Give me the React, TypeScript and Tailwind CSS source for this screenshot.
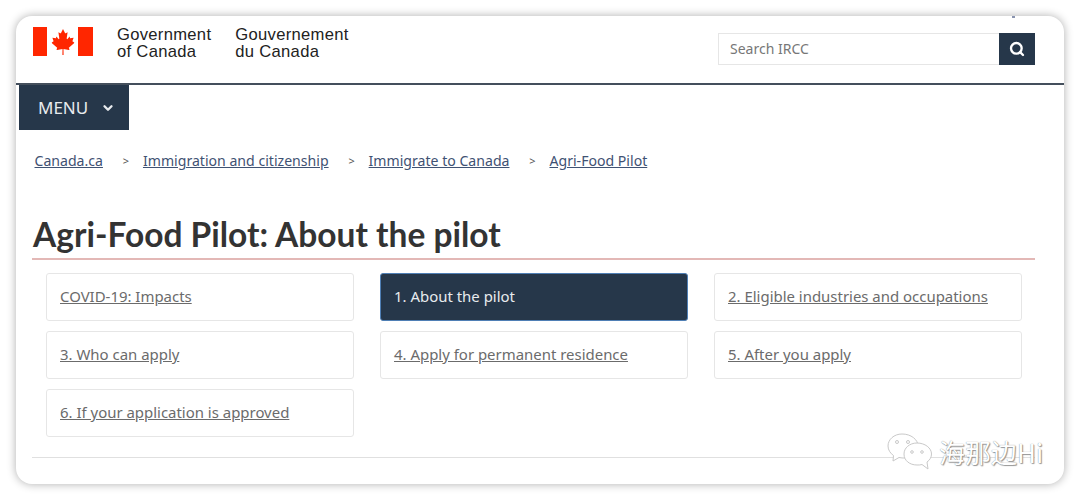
import { Search, ChevronDown } from "lucide-react";

const links = [
  { label: "COVID-19: Impacts" },
  { label: "1. About the pilot", active: true },
  { label: "2. Eligible industries and occupations" },
  { label: "3. Who can apply" },
  { label: "4. Apply for permanent residence" },
  { label: "5. After you apply" },
  { label: "6. If your application is approved" },
];

const crumbs = ["Canada.ca", "Immigration and citizenship", "Immigrate to Canada", "Agri-Food Pilot"];

const MapleLeaf = () => (
  <svg viewBox="0 0 24 24" className="w-[24px] h-[26px]" preserveAspectRatio="none">
    <path
      fill="#ff2600"
      d="M12 0 L14 3.6 C14.3 4 14.7 4 15.2 3.7 L16.6 3 L15.7 8.6 C15.6 9.4 16.2 9.6 16.7 9 L18.6 7 L19.1 8.6 L22.6 8 L21.4 11.4 L22.9 12.2 C23.4 12.5 23.4 12.9 23 13.2 L17.8 17.2 L18.4 18.8 C18.5 19.2 18.3 19.4 17.9 19.3 L12.5 18.4 L12.6 24 L11.4 24 L11.5 18.4 L6.1 19.3 C5.7 19.4 5.5 19.2 5.6 18.8 L6.2 17.2 L1 13.2 C0.6 12.9 0.6 12.5 1.1 12.2 L2.6 11.4 L1.4 8 L4.9 8.6 L5.4 7 L7.3 9 C7.8 9.6 8.4 9.4 8.3 8.6 L7.4 3 L8.8 3.7 C9.3 4 9.7 4 10 3.6 Z"
    />
  </svg>
);

const Wechat = () => (
  <svg viewBox="0 0 46 38" className="w-[46px] h-[38px]" fill="none" stroke="#c9c9c9" strokeWidth="1">
    <path fill="#ffffff" d="M15 1 C7 1 1 6.500 1 13 C1 17 3.500 20.500 6.500 22.500 L6 28 L12 24.500 C14 25 16 25 18 25 C26 25 31 19.500 31 13 C31 6.500 24 1 15 1 Z" />
    <path fill="#ffffff" d="M30 10 C22.500 10 17 15 17 21 C17 27.500 22.500 32 30 32 C32 32 33.500 32 35 31.500 L41 36 L40 29 C43 27 44.500 24 44.500 21 C44.500 15 38 10 30 10 Z" />
    <circle cx="10" cy="9" r="1.500" />
    <circle cx="21" cy="9" r="1.500" />
    <circle cx="25" cy="19" r="1.300" />
    <circle cx="35" cy="19" r="1.300" />
  </svg>
);

const App = () => {
  return (
    <div className="relative w-[1080px] h-[500px] bg-white p-4 overflow-hidden font-['Noto_Sans',sans-serif]">
      <div className="w-full h-full bg-white rounded-[16px] shadow-[0_0_10px_rgba(0,0,0,0.32)] overflow-hidden flex flex-col">
        {/* Header */}
        <div className="h-[67px] flex-none flex items-start justify-between pl-[17px] pr-[29px] pt-[11px]">
          <div className="flex items-start">
            <div className="flex items-center w-[60px] h-[29px] justify-between">
              <div className="w-[14px] h-[29px] bg-[#ff2600]" />
              <MapleLeaf />
              <div className="w-[15px] h-[29px] bg-[#ff2600]" />
            </div>
            <div className="ml-[24px] mt-[-1px] text-[16.6px] tracking-[0.018em] leading-[17px] text-[#222] font-['Liberation_Sans',sans-serif]">
              Government
              <br />
              of Canada
            </div>
            <div className="ml-[24px] mt-[-1px] text-[16.6px] tracking-[0.018em] leading-[17px] text-[#222] font-['Liberation_Sans',sans-serif]">
              Gouvernement
              <br />
              du Canada
            </div>
          </div>
          <div className="flex mt-[6px] h-[32px]">
            <div className="w-[281px] border border-[#e6e6e6] border-r-0 pl-[11px] pb-[2px] flex items-center text-[14px] text-[#777]">
              Search IRCC
            </div>
            <div className="w-[36px] bg-[#26374a] flex items-center justify-center">
              <Search size={16} strokeWidth={3.500} className="text-white" />
            </div>
          </div>
        </div>
        <div className="h-[2px] flex-none bg-[#444f5c]" />

        {/* Menu */}
        <div className="flex-none pl-[3px]">
          <div className="w-[110px] h-[45px] bg-[#26374a] flex items-center pl-[19px] text-[17px] text-[#e8ebee]">
            MENU
            <ChevronDown size={14} strokeWidth={4} className="ml-[13px]" />
          </div>
        </div>

        {/* Breadcrumb */}
        <div className="flex items-center pl-[18.5px] mt-[20px] h-[22px] text-[14.1px] text-[#3f5273]">
          {crumbs.map((c, i) => (
            <div key={c} className="flex items-center">
              {i > 0 && <span className="w-[40px] text-center text-[#555] text-[11px] pl-[6px]">&gt;</span>}
              <span className="underline">{c}</span>
            </div>
          ))}
        </div>

        {/* Title */}
        <div className="ml-[16px] mt-[39px] mr-[29px] border-b-2 border-[#e3b8b6]">
          <h1 className="pl-[1px] font-['Lato',sans-serif] font-bold text-[33.5px] leading-[46px] text-[#333] h-[47px]">
            Agri-Food Pilot: About the pilot
          </h1>
        </div>

        {/* Pilot steps */}
        <div className="mx-[30px] mt-[13px] grid grid-cols-[308px_308px_308px] gap-x-[26px] gap-y-[10px]">
          {links.map((l) =>
            l.active ? (
              <div
                key={l.label}
                className="h-[48px] rounded-[3px] border border-[#4f7fb5] bg-[#26374a] text-[#e8ebee] flex items-center pl-[13px] pb-[1px] text-[14.95px]"
              >
                {l.label}
              </div>
            ) : (
              <div
                key={l.label}
                className="h-[48px] rounded-[3px] border border-[#e6e6e6] bg-white text-[#6b6b6b] flex items-center pl-[13px] pb-[1px] text-[14.95px] underline"
              >
                {l.label}
              </div>
            )
          )}
        </div>

        <div className="ml-[16px] mr-[29px] mt-[20px] h-px flex-none bg-[#e0e0e0]" />
      </div>

      {/* Watermark */}
      <div className="absolute left-[887px] top-[433px] flex items-center">
        <Wechat />
        <span className="ml-[6px] text-[26px] leading-[30px] text-white font-['Noto_Sans_CJK_SC',sans-serif] [text-shadow:0_0_1px_#777,1px_1px_1px_#999]">
          海那边Hi
        </span>
      </div>
      {/* stray mark left at the top edge of the capture */}
      <div className="absolute left-[1012px] top-[16px] w-[3px] h-[2px] bg-[#8a94b0]" />
    </div>
  );
};

export default App;
